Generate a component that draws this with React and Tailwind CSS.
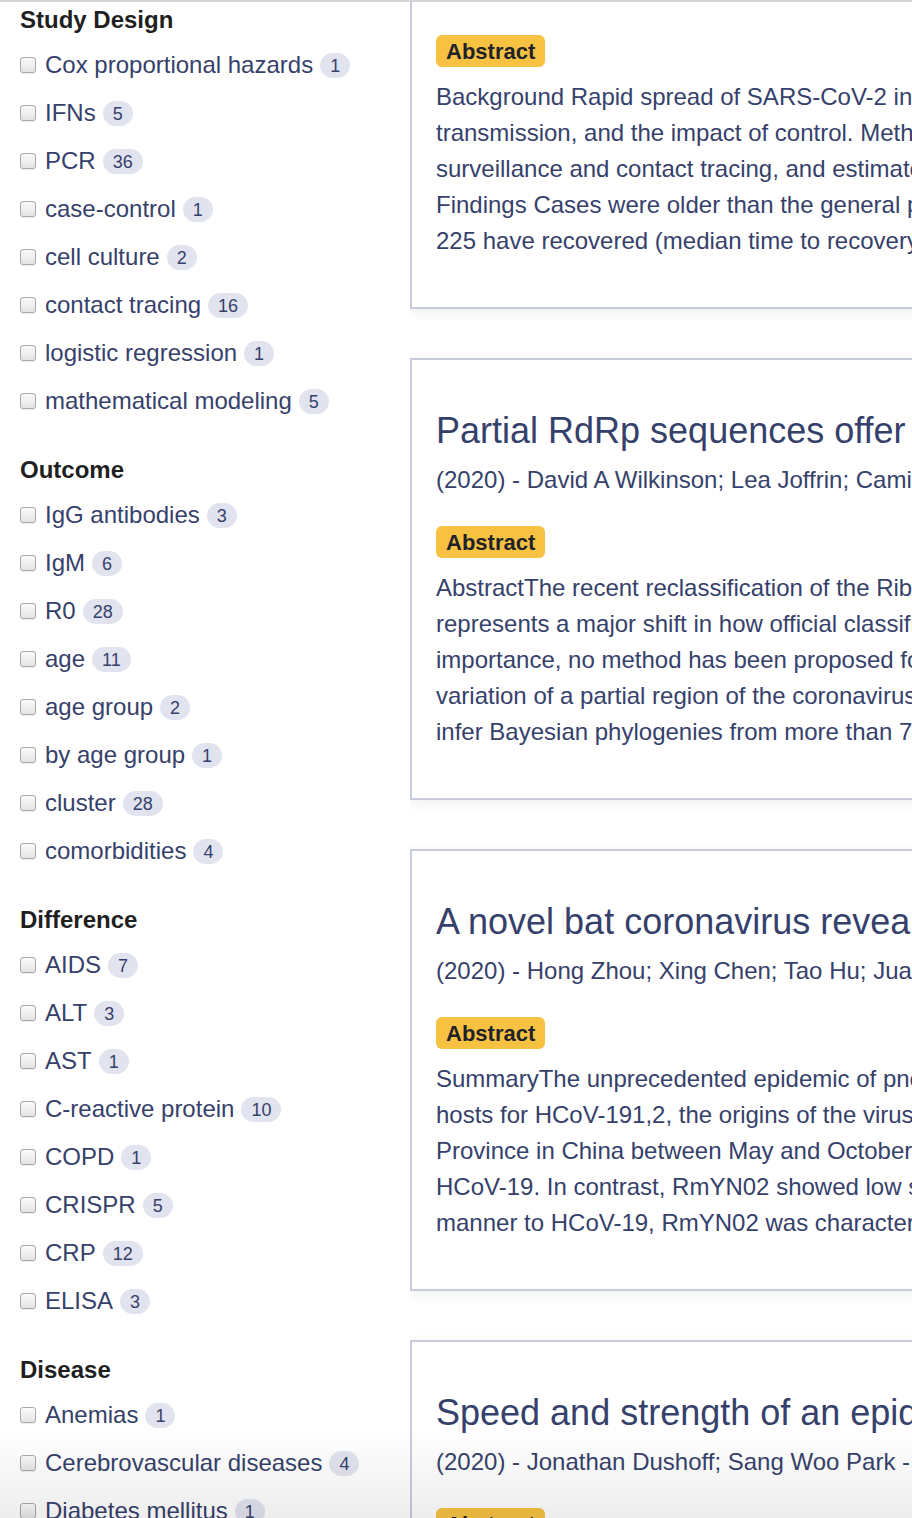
import React from "react";

const sections = [
  {
    title: "Study Design",
    items: [
      ["Cox proportional hazards", 1],
      ["IFNs", 5],
      ["PCR", 36],
      ["case-control", 1],
      ["cell culture", 2],
      ["contact tracing", 16],
      ["logistic regression", 1],
      ["mathematical modeling", 5],
    ],
  },
  {
    title: "Outcome",
    items: [
      ["IgG antibodies", 3],
      ["IgM", 6],
      ["R0", 28],
      ["age", 11],
      ["age group", 2],
      ["by age group", 1],
      ["cluster", 28],
      ["comorbidities", 4],
    ],
  },
  {
    title: "Difference",
    items: [
      ["AIDS", 7],
      ["ALT", 3],
      ["AST", 1],
      ["C-reactive protein", 10],
      ["COPD", 1],
      ["CRISPR", 5],
      ["CRP", 12],
      ["ELISA", 3],
    ],
  },
  {
    title: "Disease",
    items: [
      ["Anemias", 1],
      ["Cerebrovascular diseases", 4],
      ["Diabetes mellitus", 1],
      ["Hypertension", 2],
    ],
  },
];

const cards = [
  {
    title:
      "Clinical characteristics and transmission dynamics of COVID-19 in Shenzhen, China",
    authors: "(2020) - Qifang Bi; Yongsheng Wu; Shujiang Mei; Chenfei Ye",
    lines: [
      "Background Rapid spread of SARS-CoV-2 in Wuhan prompted heightened surveillance in Shenzhen and elsewhere in China.",
      "transmission, and the impact of control. Methods The Shenzhen Centre for Disease Control and Prevention identified",
      "surveillance and contact tracing, and estimated the time from symptom onset to confirmation, isolation, and admission",
      "Findings Cases were older than the general population (mean age 45 years) and balanced between males and females.",
      "225 have recovered (median time to recovery 21 days; 95% CI 20–22) and three have died. Compared with cases",
    ],
  },
  {
    title:
      "Partial RdRp sequences offer a robust method for Coronavirus subgenus classification",
    authors:
      "(2020) - David A Wilkinson; Lea Joffrin; Camille Lebarbenchon; Patrick Mavingui",
    lines: [
      "AbstractThe recent reclassification of the Riboviria, and the introduction of multiple new taxonomic categories",
      "represents a major shift in how official classifications are used to designate specific viral lineages. While the",
      "importance, no method has been proposed for the assignment of subgenus based on partial sequence data. Here",
      "variation of a partial region of the coronavirus RNA-dependent RNA polymerase (RdRp), a commonly used",
      "infer Bayesian phylogenies from more than 700 coronavirus sequences and define subgenus-specific thresholds",
    ],
  },
  {
    title:
      "A novel bat coronavirus reveals natural insertions at the S1/S2 cleavage site of the Spike protein",
    authors: "(2020) - Hong Zhou; Xing Chen; Tao Hu; Juan Li; Hao Song; Yanran Liu",
    lines: [
      "SummaryThe unprecedented epidemic of pneumonia caused by a novel coronavirus, HCoV-19, in China and beyond",
      "hosts for HCoV-191,2, the origins of the virus remain unclear. Here, we report a novel bat-derived coronavirus",
      "Province in China between May and October, 2019. RmYN02 shared 93.3% nucleotide identity with HCoV-19 at",
      "HCoV-19. In contrast, RmYN02 showed low sequence identity (62.5%) to HCoV-19 in the receptor binding domain",
      "manner to HCoV-19, RmYN02 was characterized by the insertion of multiple amino acids at the junction site",
    ],
  },
  {
    title: "Speed and strength of an epidemic intervention",
    authors: "(2020) - Jonathan Dushoff; Sang Woo Park - medRxiv",
    lines: [
      "An epidemic can be characterized by its speed (i.e., the exponential growth rate r) and strength (i.e., the",
      "reproductive number R). Disease modelers have historically focused on the strength of epidemics, while",
      "epidemic data are often used to estimate speed. Here we show how the speed and strength of an epidemic",
      "intervention can be linked to quantify the effects of interventions on both speed and strength of",
      "an epidemic, and how these relationships depend on the generation-interval distribution of the disease",
    ],
  },
];

function Checkbox() {
  return (
    <span className="inline-block w-[16px] h-[16px] shrink-0 rounded-[3px] border border-[#a9a9a9] bg-gradient-to-b from-[#fbfbfb] to-[#e4e4e4] shadow-[0_1px_1px_rgba(0,0,0,0.08)]" />
  );
}

function Section({ title, items }) {
  return (
    <div className="mb-[27px]">
      <div className="text-[24px] leading-[36px] font-bold text-[#1f1f1f] mb-[3px]">
        {title}
      </div>
      {items.map(([label, count]) => (
        <div key={label} className="h-[48px] flex items-center whitespace-nowrap">
          <Checkbox />
          <span className="ml-[9px] text-[24px] leading-[30px] text-[#36416b]">
            {label}
          </span>
          <span className="ml-[7px] inline-flex items-center h-[25px] px-[10px] rounded-full bg-[#e1e3ef] text-[18px] leading-none text-[#36416b] mt-[1px]">
            {count}
          </span>
        </div>
      ))}
    </div>
  );
}

function Card({ title, authors, lines }) {
  return (
    <div className="w-[1000px] border-2 border-[#c8cbdc] bg-white shadow-[0_3px_12px_rgba(40,45,80,0.08)] pl-[24px] pt-[49px] pb-[48px] mb-[49px]">
      <div className="text-[36px] leading-[44px] text-[#36416b] whitespace-nowrap">
        {title}
      </div>
      <div className="mt-[9px] text-[24px] leading-[36px] text-[#36416b] whitespace-nowrap">
        {authors}
      </div>
      <div className="mt-[28px]">
        <span className="inline-flex items-center h-[32px] px-[10px] rounded-[6px] bg-[#f7c242] text-[22px] font-bold text-[#1f2229]">
          Abstract
        </span>
      </div>
      <div className="mt-[12px] text-[24px] leading-[36px] text-[#36416b]">
        {lines.map((l, i) => (
          <div key={i} className="whitespace-nowrap">
            {l}
          </div>
        ))}
      </div>
    </div>
  );
}

export default function App() {
  return (
    <div className="relative w-[912px] h-[1518px] overflow-hidden bg-white font-['Liberation_Sans',Arial,sans-serif] border-t-2 border-[#d4d4d4]">
      <div className="flex h-full">
        <div className="w-[410px] shrink-0 pl-[20px]">
          {sections.map((s) => (
            <Section key={s.title} {...s} />
          ))}
        </div>
        <div className="flex-1 min-w-0 overflow-hidden">
          <div className="mt-[-135px]">
            {cards.map((c, i) => (
              <Card key={i} {...c} />
            ))}
          </div>
        </div>
      </div>
      <div className="absolute left-0 right-0 bottom-0 h-[90px] bg-gradient-to-b from-transparent to-[rgba(0,0,0,0.07)] pointer-events-none" />
    </div>
  );
}
